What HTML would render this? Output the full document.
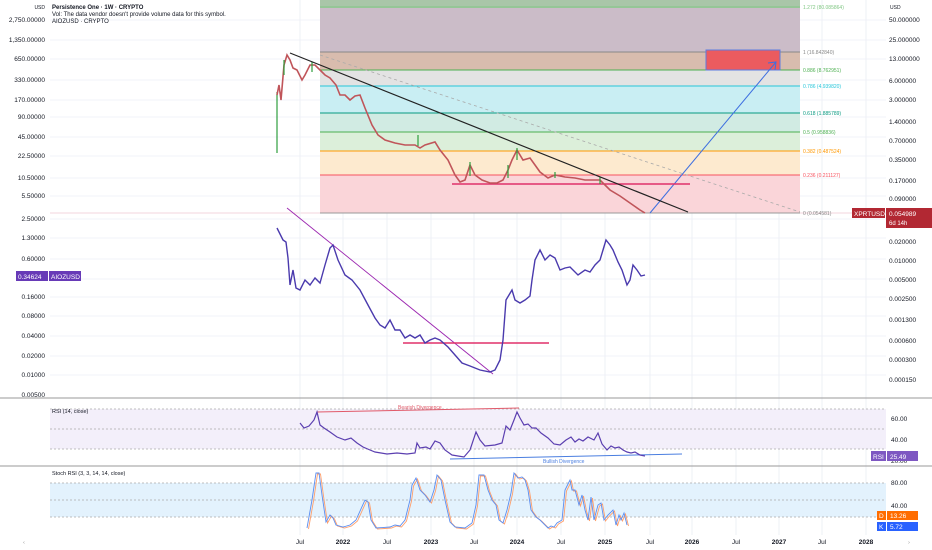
<!DOCTYPE html>
<html><head><meta charset="utf-8"><style>
html,body{margin:0;padding:0;background:#fff;}
svg{display:block;font-family:"Liberation Sans",sans-serif;}
</style></head><body>
<svg width="932" height="550" viewBox="0 0 932 550" xmlns="http://www.w3.org/2000/svg">
<rect width="932" height="550" fill="#fff"/>
<g stroke="#f0f3fa" stroke-width="1">
<line x1="50" x2="886" y1="20" y2="20"/><line x1="50" x2="886" y1="40" y2="40"/><line x1="50" x2="886" y1="59" y2="59"/><line x1="50" x2="886" y1="80" y2="80"/><line x1="50" x2="886" y1="100" y2="100"/><line x1="50" x2="886" y1="117" y2="117"/><line x1="50" x2="886" y1="137" y2="137"/><line x1="50" x2="886" y1="156" y2="156"/><line x1="50" x2="886" y1="178" y2="178"/><line x1="50" x2="886" y1="196" y2="196"/><line x1="50" x2="886" y1="219" y2="219"/><line x1="50" x2="886" y1="238" y2="238"/><line x1="50" x2="886" y1="259" y2="259"/><line x1="50" x2="886" y1="279" y2="279"/><line x1="50" x2="886" y1="297" y2="297"/><line x1="50" x2="886" y1="316" y2="316"/><line x1="50" x2="886" y1="336" y2="336"/><line x1="50" x2="886" y1="356" y2="356"/><line x1="50" x2="886" y1="375" y2="375"/>
</g>
<line x1="50" x2="886" y1="213" y2="213" stroke="#f3d6dd"/>
<g stroke="#eef0f5" stroke-width="1">
<line x1="300" x2="300" y1="0" y2="535"/><line x1="343" x2="343" y1="0" y2="535"/><line x1="387" x2="387" y1="0" y2="535"/><line x1="431" x2="431" y1="0" y2="535"/><line x1="474" x2="474" y1="0" y2="535"/><line x1="517" x2="517" y1="0" y2="535"/><line x1="561" x2="561" y1="0" y2="535"/><line x1="605" x2="605" y1="0" y2="535"/><line x1="650" x2="650" y1="0" y2="535"/><line x1="692" x2="692" y1="0" y2="535"/><line x1="736" x2="736" y1="0" y2="535"/><line x1="779" x2="779" y1="0" y2="535"/><line x1="822" x2="822" y1="0" y2="535"/><line x1="866" x2="866" y1="0" y2="535"/>
</g>
<rect x="320" y="0" width="480" height="8" fill="#a9c6a8"/>
<rect x="320" y="8" width="480" height="44" fill="#cbbcc8"/>
<rect x="320" y="52" width="480" height="18" fill="#d8bcae"/>
<rect x="320" y="70" width="480" height="16" fill="#e3e3e3"/>
<rect x="320" y="86" width="480" height="27" fill="#c9eef3"/>
<rect x="320" y="113" width="480" height="19" fill="#d1ebe3"/>
<rect x="320" y="132" width="480" height="19" fill="#dcefda"/>
<rect x="320" y="151" width="480" height="24" fill="#fdeacf"/>
<rect x="320" y="175" width="480" height="38" fill="#fad5d9"/>
<g stroke-width="1">
<line x1="320" x2="800" y1="7" y2="7" stroke="#81c784"/>
<line x1="320" x2="800" y1="52" y2="52" stroke="#888"/>
<line x1="320" x2="800" y1="70" y2="70" stroke="#4caf50"/>
<line x1="320" x2="800" y1="86" y2="86" stroke="#26c6da"/>
<line x1="320" x2="800" y1="113" y2="113" stroke="#089981"/>
<line x1="320" x2="800" y1="132" y2="132" stroke="#4caf50"/>
<line x1="320" x2="800" y1="151" y2="151" stroke="#ff9800"/>
<line x1="320" x2="800" y1="175" y2="175" stroke="#f7525f"/>
<line x1="320" x2="800" y1="213" y2="213" stroke="#999"/>
</g>
<g font-size="5" >
<text x="803" y="9" fill="#81c784">1.272 (80.085864)</text>
<text x="803" y="54" fill="#888">1 (16.842840)</text>
<text x="803" y="72" fill="#4caf50">0.886 (8.762951)</text>
<text x="803" y="88" fill="#26c6da">0.786 (4.939820)</text>
<text x="803" y="115" fill="#089981">0.618 (1.885789)</text>
<text x="803" y="134" fill="#4caf50">0.5 (0.958836)</text>
<text x="803" y="153" fill="#ff9800">0.382 (0.487524)</text>
<text x="803" y="177" fill="#f7525f">0.236 (0.211127)</text>
<text x="803" y="215" fill="#888">0 (0.054581)</text>
</g>
<rect x="706" y="50" width="74" height="20" fill="#eb5b5f" stroke="#5b7be0" stroke-width="1"/>
<line x1="650" y1="213" x2="776" y2="62" stroke="#3d6fe0" stroke-width="1"/>
<polyline points="768,63 776,62 775,70" fill="none" stroke="#3d6fe0" stroke-width="1"/>
<line x1="320" y1="55" x2="800" y2="212" stroke="#aaa" stroke-width="0.8" stroke-dasharray="3,3"/>
<line x1="452" y1="184" x2="690" y2="184" stroke="#e0306a" stroke-width="1.6"/>
<line x1="277" y1="92" x2="277" y2="153" stroke="#2e9e3e" stroke-width="1.2"/>
<polyline fill="none" stroke="#c0555a" stroke-width="1.6" points="277,95 279,85 281,100 284,65 287,55 290,60 293,68 297,70 302,80 305,75 310,65 315,65 320,70 325,75 330,78 336,85 340,95 345,95 350,100 355,96 360,95 365,108 372,125 378,135 385,140 395,143 405,145 415,145 420,148 425,145 435,142 440,150 448,160 455,175 460,182 465,180 470,165 475,175 482,180 490,183 497,183 503,180 508,170 512,160 517,150 523,160 530,158 535,165 540,172 548,178 555,175 565,177 575,178 585,180 600,180 605,185 610,190 620,196 630,203 640,210 645,213"/>
<g stroke="#2e9e3e" stroke-width="1.2"><line x1="284" y1="60" x2="284" y2="75"/><line x1="312" y1="62" x2="312" y2="72"/><line x1="418" y1="135" x2="418" y2="146"/><line x1="470" y1="162" x2="470" y2="176"/><line x1="508" y1="165" x2="508" y2="178"/><line x1="517" y1="148" x2="517" y2="160"/><line x1="555" y1="172" x2="555" y2="178"/><line x1="600" y1="177" x2="600" y2="184"/></g>
<line x1="290" y1="53" x2="688" y2="212" stroke="#222" stroke-width="1.2"/>
<line x1="287" y1="208" x2="493" y2="374" stroke="#9c27b0" stroke-width="0.9"/>
<line x1="403" y1="343" x2="549" y2="343" stroke="#e0306a" stroke-width="1.4"/>
<polyline fill="none" stroke="#4a3aad" stroke-width="1.4" points="277,228 283,240 286,242 288,258 290,285 293,270 296,288 300,290 305,280 310,285 315,278 320,283 325,265 330,248 333,245 338,260 345,275 352,280 360,290 368,305 375,318 380,325 385,328 390,320 395,330 400,330 405,338 410,335 415,338 420,335 425,343 430,340 435,338 440,340 448,347 455,355 462,363 470,366 480,370 490,372 495,370 500,360 503,340 506,300 509,295 512,290 515,300 520,303 525,300 530,296 532,280 535,260 540,250 545,260 550,255 555,258 560,270 565,268 570,267 578,275 585,270 590,272 595,265 600,260 603,250 606,240 610,245 613,250 618,262 622,270 627,285 630,280 633,265 637,270 641,276 645,275"/>
<g font-size="6" fill="#131722">
<text x="52" y="9" font-weight="bold">Persistence One · 1W · CRYPTO</text>
<text x="52" y="16">Vol: The data vendor doesn't provide volume data for this symbol.</text>
<text x="52" y="23">AIOZUSD · CRYPTO</text>
</g>
<g font-size="6.5" fill="#131722" text-anchor="end">
<text x="45" y="9" font-size="5">USD</text>
<text x="45" y="22">2,750.00000</text><text x="45" y="42">1,350.00000</text><text x="45" y="61">650.00000</text><text x="45" y="82">330.00000</text><text x="45" y="102">170.00000</text><text x="45" y="119">90.00000</text><text x="45" y="139">45.00000</text><text x="45" y="158">22.50000</text><text x="45" y="180">10.50000</text><text x="45" y="198">5.50000</text><text x="45" y="221">2.50000</text><text x="45" y="240">1.30000</text><text x="45" y="261">0.60000</text><text x="45" y="299">0.16000</text><text x="45" y="318">0.08000</text><text x="45" y="338">0.04000</text><text x="45" y="358">0.02000</text><text x="45" y="377">0.01000</text><text x="45" y="397">0.00500</text>
</g>
<rect x="16" y="271" width="32" height="10" fill="#673ab7"/><rect x="49" y="271" width="32" height="10" fill="#673ab7"/>
<g font-size="6.5" fill="#fff"><text x="18" y="279">0.34624</text><text x="51" y="279">AIOZUSD</text></g>
<g font-size="6.5" fill="#131722">
<text x="890" y="9" font-size="5">USD</text>
<text x="889" y="22">50.000000</text><text x="889" y="42">25.000000</text><text x="889" y="61">13.000000</text><text x="889" y="83">6.000000</text><text x="889" y="102">3.000000</text><text x="889" y="124">1.400000</text><text x="889" y="143">0.700000</text><text x="889" y="162">0.350000</text><text x="889" y="183">0.170000</text><text x="889" y="201">0.090000</text>
<text x="889" y="244">0.020000</text><text x="889" y="263">0.010000</text><text x="889" y="282">0.005000</text><text x="889" y="301">0.002500</text><text x="889" y="322">0.001300</text><text x="889" y="343">0.000600</text><text x="889" y="362">0.000300</text><text x="889" y="382">0.000150</text>
<text x="891" y="421">60.00</text><text x="891" y="442">40.00</text><text x="891" y="463">20.00</text>
<text x="891" y="485">80.00</text><text x="891" y="508">40.00</text>
</g>
<rect x="852" y="208" width="33" height="10" fill="#b22833"/><text x="854" y="216" font-size="6.5" fill="#fff">XPRTUSD</text>
<rect x="886" y="208" width="46" height="20" fill="#b22833"/><text x="889" y="216" font-size="6.5" fill="#fff">0.054989</text><text x="889" y="225" font-size="6" fill="#fff">6d 14h</text>
<line x1="0" x2="932" y1="398" y2="398" stroke="#999" stroke-width="1"/>
<line x1="0" x2="932" y1="466" y2="466" stroke="#999" stroke-width="1"/>
<rect x="50" y="409" width="836" height="40" fill="#f3effa"/>
<g stroke="#aaa" stroke-width="0.7" stroke-dasharray="2,2"><line x1="50" x2="886" y1="409" y2="409"/><line x1="50" x2="886" y1="429" y2="429"/><line x1="50" x2="886" y1="449" y2="449"/></g>
<text x="52" y="413" font-size="5.5" fill="#131722">RSI (14, close)</text>
<line x1="317" y1="412" x2="519" y2="408" stroke="#e15a6a" stroke-width="1"/>
<text x="398" y="409" font-size="5" fill="#e15a6a">Bearish Divergence</text>
<line x1="450" y1="459" x2="682" y2="454" stroke="#4a7ee0" stroke-width="1"/>
<text x="543" y="463" font-size="5" fill="#4a7ee0">Bullish Divergence</text>
<polyline fill="none" stroke="#5b3fb0" stroke-width="1.2" points="300,423 304,428 309,426 314,420 317,412 320,425 324,428 330,432 337,437 345,440 351,438 357,443 363,447 370,450 375,452 381,453 387,454 397,453 407,454 415,453 417,443 420,448 426,447 430,449 435,441 440,443 445,450 452,455 458,456 464,457 470,450 476,432 480,440 485,446 495,445 502,443 506,426 510,430 514,420 517,412 520,418 524,425 528,424 532,428 536,428 541,433 548,438 554,444 560,445 566,440 571,437 575,442 579,439 583,441 588,437 594,440 598,433 602,444 607,450 611,446 615,448 619,447 623,450 627,452 631,453 635,452 640,455 645,456"/>
<rect x="871" y="451" width="15" height="10" fill="#7e57c2"/><text x="873" y="459" font-size="6.5" fill="#fff">RSI</text>
<rect x="887" y="451" width="31" height="10" fill="#7e57c2"/><text x="890" y="459" font-size="6.5" fill="#fff">25.49</text>
<rect x="50" y="483" width="836" height="34" fill="#e3f2fd"/>
<g stroke="#aaa" stroke-width="0.7" stroke-dasharray="2,2"><line x1="50" x2="886" y1="483" y2="483"/><line x1="50" x2="886" y1="500" y2="500"/><line x1="50" x2="886" y1="517" y2="517"/></g>
<text x="52" y="475" font-size="5.5" fill="#131722">Stoch RSI (3, 3, 14, 14, close)</text>
<polyline fill="none" stroke="#ff9f6b" stroke-width="0.9" transform="translate(1.5,1)" points="307,528 312,500 316,473 319,473 322,495 326,522 330,515 333,518 336,525 343,527 350,525 356,520 365,500 368,502 371,520 376,528 390,527 395,525 400,526 405,520 410,500 412,485 416,478 420,490 425,495 430,502 434,490 437,475 441,480 445,500 450,522 455,527 465,528 472,523 476,505 479,475 484,475 488,490 492,500 496,505 499,520 503,523 507,510 511,493 514,473 518,478 522,477 525,480 528,490 531,510 536,517 540,520 545,525 548,528 551,526 554,527 557,523 562,520 565,490 570,480 572,490 575,490 579,505 582,495 585,510 588,520 591,497 594,520 598,505 601,503 604,520 608,515 613,510 616,525 619,515 621,520 624,513 627,525"/>
<polyline fill="none" stroke="#5b8ef0" stroke-width="0.9" points="307,528 312,500 316,473 319,473 322,495 326,522 330,515 333,518 336,525 343,527 350,525 356,520 365,500 368,502 371,520 376,528 390,527 395,525 400,526 405,520 410,500 412,485 416,478 420,490 425,495 430,502 434,490 437,475 441,480 445,500 450,522 455,527 465,528 472,523 476,505 479,475 484,475 488,490 492,500 496,505 499,520 503,523 507,510 511,493 514,473 518,478 522,477 525,480 528,490 531,510 536,517 540,520 545,525 548,528 551,526 554,527 557,523 562,520 565,490 570,480 572,490 575,490 579,505 582,495 585,510 588,520 591,497 594,520 598,505 601,503 604,520 608,515 613,510 616,525 619,515 621,520 624,513 627,525"/>
<rect x="877" y="511" width="9" height="9" fill="#ff6d00"/><text x="879" y="518" font-size="6.5" fill="#fff">D</text>
<rect x="887" y="511" width="31" height="9" fill="#ff6d00"/><text x="890" y="518" font-size="6.5" fill="#fff">13.26</text>
<rect x="877" y="522" width="9" height="9" fill="#2962ff"/><text x="879" y="529" font-size="6.5" fill="#fff">K</text>
<rect x="887" y="522" width="31" height="9" fill="#2962ff"/><text x="890" y="529" font-size="6.5" fill="#fff">5.72</text>
<g font-size="6.5" fill="#131722" text-anchor="middle">
<text x="300" y="544">Jul</text><text x="343" y="544" font-weight="bold">2022</text><text x="387" y="544">Jul</text><text x="431" y="544" font-weight="bold">2023</text><text x="474" y="544">Jul</text><text x="517" y="544" font-weight="bold">2024</text><text x="561" y="544">Jul</text><text x="605" y="544" font-weight="bold">2025</text><text x="650" y="544">Jul</text><text x="692" y="544" font-weight="bold">2026</text><text x="736" y="544">Jul</text><text x="779" y="544" font-weight="bold">2027</text><text x="822" y="544">Jul</text><text x="866" y="544" font-weight="bold">2028</text>
<text x="24" y="544" font-size="5" fill="#888">‹</text><text x="909" y="544" font-size="5" fill="#888">›</text>
</g>
</svg>
</body></html>
